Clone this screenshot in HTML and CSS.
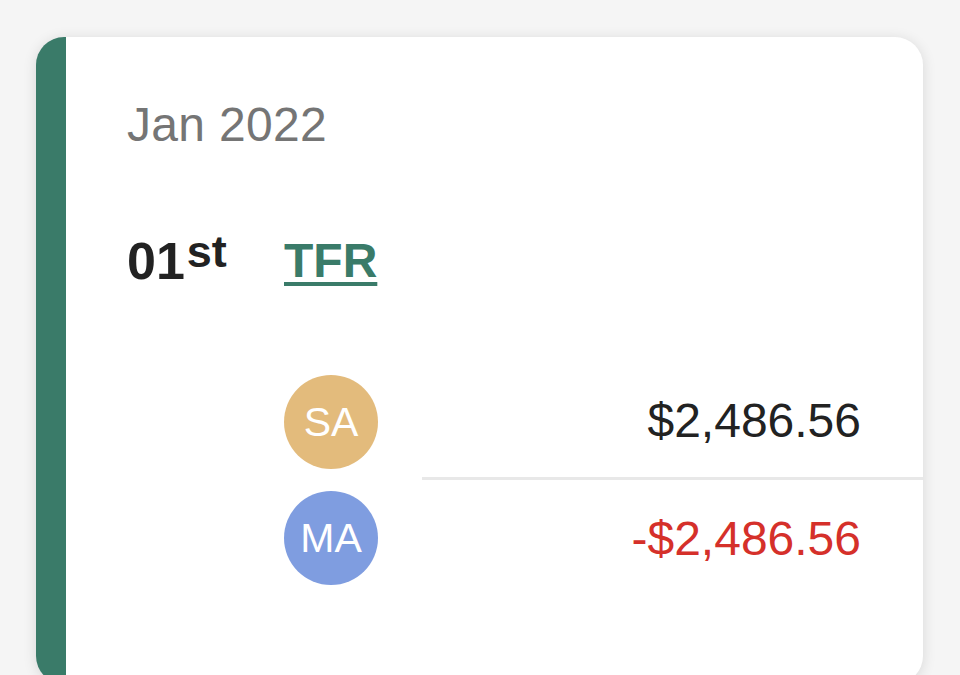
FILE: index.html
```html
<!DOCTYPE html>
<html lang="en">
<head>
<meta charset="utf-8">
<title>Transactions</title>
<link rel="stylesheet" href="styles.css">
</head>
<body>
  <div class="card">
    <h2 class="month">Jan 2022</h2>
    <div class="entry">
      <div class="day">01<sup class="ord">st</sup></div>
      <a class="type" href="#">TFR</a>
      <ul class="legs">
        <li class="leg">
          <span class="avatar avatar-sa">SA</span>
          <span class="amount">$2,486.56</span>
        </li>
        <li class="leg">
          <span class="avatar avatar-ma">MA</span>
          <span class="amount amount-neg">-$2,486.56</span>
        </li>
      </ul>
    </div>
  </div>
</body>
</html>
```

FILE: styles.css
```css
html, body {
  margin: 0;
}

body {
  background: #f5f5f5;
  font-family: "Liberation Sans", Arial, Helvetica, sans-serif;
  padding: 37px 37px 0 36px;
  overflow: hidden;
  height: 675px;
  box-sizing: border-box;
}

.card {
  background: #ffffff;
  border-left: 30px solid #3a7b69;
  border-radius: 28px;
  box-shadow: 0 2px 14px rgba(0, 0, 0, 0.12);
  padding: 60px 0 88px 61px;
}

.month {
  margin: 0;
  font-size: 48px;
  font-weight: 400;
  line-height: 56px;
  color: #757575;
  letter-spacing: 0.3px;
}

.entry {
  display: grid;
  grid-template-columns: 157px 1fr;
  align-items: center;
  margin-top: 76px;
}

.day {
  font-size: 52px;
  font-weight: 700;
  line-height: 64px;
  color: #222222;
}

.ord {
  font-size: 45px;
  line-height: 0;
  vertical-align: 12px;
  margin-left: 2px;
}

.type {
  justify-self: start;
  font-size: 48px;
  font-weight: 700;
  line-height: 64px;
  color: #3a7b69;
  text-decoration: underline;
  text-decoration-thickness: 4px;
  text-underline-offset: 5px;
}

.legs {
  grid-column: 2;
  list-style: none;
  margin: 71px 0 0;
  padding: 0;
}

.leg {
  display: flex;
  align-items: center;
  height: 116px;
}

.avatar {
  flex: none;
  width: 94px;
  height: 94px;
  border-radius: 50%;
  display: flex;
  align-items: center;
  justify-content: center;
  color: #ffffff;
  font-size: 41px;
}

.avatar-sa {
  background: #e3bb7c;
}

.avatar-ma {
  background: #7f9de0;
}

.amount {
  flex: 1;
  align-self: stretch;
  display: flex;
  align-items: center;
  justify-content: flex-end;
  margin-left: 44px;
  padding-right: 62px;
  font-size: 48px;
  color: #222222;
  border-bottom: 3px solid #e8e8e8;
}

.leg:last-child .amount {
  border-bottom: none;
}

.amount-neg {
  color: #d5302a;
}
```
